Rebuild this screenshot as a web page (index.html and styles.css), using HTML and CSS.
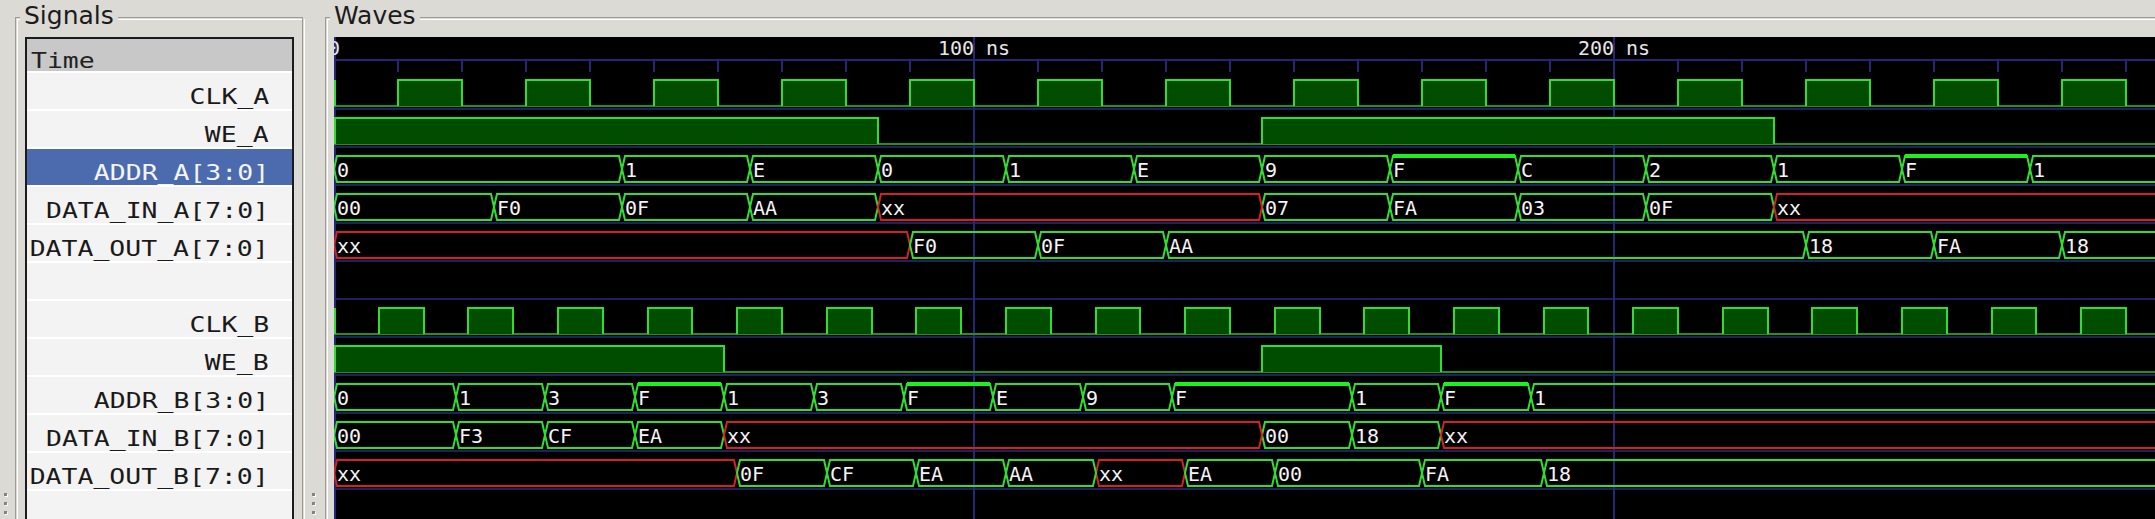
FILE: index.html
```html
<!DOCTYPE html>
<html>
<head>
<meta charset="utf-8">
<title>GTKWave</title>
<link rel="stylesheet" href="styles.css">
</head>
<body>
<div class="app">
  <div class="gutter edge"><span class="grip"></span><span class="grip"></span><span class="grip"></span></div>
  <section class="frame signals">
    <span class="frame-title">Signals</span>
    <div class="siglist">
      <div class="sighead"><span class="nm">Time</span></div>
      <div class="sig"><span class="nm">CLK_A</span></div>
      <div class="sig"><span class="nm">WE_A</span></div>
      <div class="sig sel"><span class="nm">ADDR_A[3:0]</span></div>
      <div class="sig"><span class="nm">DATA_IN_A[7:0]</span></div>
      <div class="sig"><span class="nm">DATA_OUT_A[7:0]</span></div>
      <div class="sig"></div>
      <div class="sig"><span class="nm">CLK_B</span></div>
      <div class="sig"><span class="nm">WE_B</span></div>
      <div class="sig"><span class="nm">ADDR_B[3:0]</span></div>
      <div class="sig"><span class="nm">DATA_IN_B[7:0]</span></div>
      <div class="sig"><span class="nm">DATA_OUT_B[7:0]</span></div>
      <div class="sig"></div>
    </div>
  </section>
  <div class="gutter mid"><span class="grip"></span><span class="grip"></span><span class="grip"></span></div>
  <section class="frame waves">
    <span class="frame-title">Waves</span>
    <div class="canvas">
      <svg class="wv" width="1840" height="490" viewBox="0 0 1840 490" xmlns="http://www.w3.org/2000/svg">
        <defs>
          <pattern id="pclka" patternUnits="userSpaceOnUse" x="0" y="0" width="128" height="490">
            <rect x="64" y="43" width="64" height="26" class="fill"/>
          </pattern>
          <pattern id="pclkb" patternUnits="userSpaceOnUse" x="0" y="0" width="89.6" height="490">
            <rect x="44.8" y="271" width="44.8" height="26" class="fill"/>
          </pattern>
        </defs>
        <!-- grid -->
        <path class="sep" d="M0,72H1840 M0,110H1840 M0,148H1840 M0,186H1840 M0,224H1840 M0,262H1840 M0,300H1840 M0,338H1840 M0,376H1840 M0,414H1840 M0,452H1840"/>
        <path class="grid" d="M0,23H1840 M64,23V35 M128,23V35 M192,23V35 M256,23V35 M320,23V35 M384,23V35 M448,23V35 M512,23V35 M576,23V35 M704,23V35 M768,23V35 M832,23V35 M896,23V35 M960,23V35 M1024,23V35 M1088,23V35 M1152,23V35 M1216,23V35 M1344,23V35 M1408,23V35 M1472,23V35 M1536,23V35 M1600,23V35 M1664,23V35 M1728,23V35 M1792,23V35"/>
        <path class="grid" d="M1,0V490 M640,0V490 M1280,0V490"/>
        <text class="rt" x="0" y="18">0</text>
        <text class="rt" x="640" y="18">100 ns</text>
        <text class="rt" x="1280" y="18">200 ns</text>

        <!-- CLK_A -->
        <path class="lo" d="M0,69H1840"/>
        <rect x="0" y="43" width="1840" height="26" fill="url(#pclka)"/>
        <path class="hi" d="M1,43V69 M64,69V43H128V69 M192,69V43H256V69 M320,69V43H384V69 M448,69V43H512V69 M576,69V43H640V69 M704,69V43H768V69 M832,69V43H896V69 M960,69V43H1024V69 M1088,69V43H1152V69 M1216,69V43H1280V69 M1344,69V43H1408V69 M1472,69V43H1536V69 M1600,69V43H1664V69 M1728,69V43H1792V69"/>

        <!-- WE_A -->
        <path class="lo" d="M0,107H1840"/>
        <rect class="fill" x="1" y="81" width="543" height="26"/>
        <rect class="fill" x="928" y="81" width="512" height="26"/>
        <path class="hi" d="M1,107V81H544V107 M928,107V81H1440V107"/>

        <!-- ADDR_A -->
        <path class="bus" d="M0,132L3,119H285L288,132L285,145H3Z M288,132L291,119H413L416,132L413,145H291Z M416,132L419,119H541L544,132L541,145H419Z M544,132L547,119H669L672,132L669,145H547Z M672,132L675,119H797L800,132L797,145H675Z M800,132L803,119H925L928,132L925,145H803Z M928,132L931,119H1053L1056,132L1053,145H931Z M1056,132L1059,119H1181L1184,132L1181,145H1059Z M1184,132L1187,119H1309L1312,132L1309,145H1187Z M1312,132L1315,119H1437L1440,132L1437,145H1315Z M1440,132L1443,119H1565L1568,132L1565,145H1443Z M1568,132L1571,119H1693L1696,132L1693,145H1571Z M1696,132L1699,119H1845V145H1699Z"/>
        <path class="ones" d="M1059,119H1181 M1571,119H1693"/>
        <text class="vt" x="3" y="140">0</text>
        <text class="vt" x="291" y="140">1</text>
        <text class="vt" x="419" y="140">E</text>
        <text class="vt" x="547" y="140">0</text>
        <text class="vt" x="675" y="140">1</text>
        <text class="vt" x="803" y="140">E</text>
        <text class="vt" x="931" y="140">9</text>
        <text class="vt" x="1059" y="140">F</text>
        <text class="vt" x="1187" y="140">C</text>
        <text class="vt" x="1315" y="140">2</text>
        <text class="vt" x="1443" y="140">1</text>
        <text class="vt" x="1571" y="140">F</text>
        <text class="vt" x="1699" y="140">1</text>

        <!-- DATA_IN_A -->
        <path class="bus" d="M0,170L3,157H157L160,170L157,183H3Z M160,170L163,157H285L288,170L285,183H163Z M288,170L291,157H413L416,170L413,183H291Z M416,170L419,157H541L544,170L541,183H419Z M928,170L931,157H1053L1056,170L1053,183H931Z M1056,170L1059,157H1181L1184,170L1181,183H1059Z M1184,170L1187,157H1309L1312,170L1309,183H1187Z M1312,170L1315,157H1437L1440,170L1437,183H1315Z"/>
        <path class="busx" d="M544,170L547,157H925L928,170L925,183H547Z M1440,170L1443,157H1845V183H1443Z"/>
        <text class="vt" x="3" y="178">00</text>
        <text class="vt" x="163" y="178">F0</text>
        <text class="vt" x="291" y="178">0F</text>
        <text class="vt" x="419" y="178">AA</text>
        <text class="vt" x="547" y="178">xx</text>
        <text class="vt" x="931" y="178">07</text>
        <text class="vt" x="1059" y="178">FA</text>
        <text class="vt" x="1187" y="178">03</text>
        <text class="vt" x="1315" y="178">0F</text>
        <text class="vt" x="1443" y="178">xx</text>

        <!-- DATA_OUT_A -->
        <path class="busx" d="M0,208L3,195H573L576,208L573,221H3Z"/>
        <path class="bus" d="M576,208L579,195H701L704,208L701,221H579Z M704,208L707,195H829L832,208L829,221H707Z M832,208L835,195H1469L1472,208L1469,221H835Z M1472,208L1475,195H1597L1600,208L1597,221H1475Z M1600,208L1603,195H1725L1728,208L1725,221H1603Z M1728,208L1731,195H1845V221H1731Z"/>
        <text class="vt" x="3" y="216">xx</text>
        <text class="vt" x="579" y="216">F0</text>
        <text class="vt" x="707" y="216">0F</text>
        <text class="vt" x="835" y="216">AA</text>
        <text class="vt" x="1475" y="216">18</text>
        <text class="vt" x="1603" y="216">FA</text>
        <text class="vt" x="1731" y="216">18</text>

        <!-- CLK_B -->
        <path class="lo" d="M0,297H1840"/>
        <rect x="0" y="271" width="1795" height="26" fill="url(#pclkb)"/>
        <path class="hi" d="M1,271V297 M45,297V271H90V297 M134,297V271H179V297 M224,297V271H269V297 M314,297V271H358V297 M403,297V271H448V297 M493,297V271H538V297 M582,297V271H627V297 M672,297V271H717V297 M762,297V271H806V297 M851,297V271H896V297 M941,297V271H986V297 M1030,297V271H1075V297 M1120,297V271H1165V297 M1210,297V271H1254V297 M1299,297V271H1344V297 M1389,297V271H1434V297 M1478,297V271H1523V297 M1568,297V271H1613V297 M1658,297V271H1702V297 M1747,297V271H1792V297"/>

        <!-- WE_B -->
        <path class="lo" d="M0,335H1840"/>
        <rect class="fill" x="1" y="309" width="389" height="26"/>
        <rect class="fill" x="928" y="309" width="179" height="26"/>
        <path class="hi" d="M1,335V309H390V335 M928,335V309H1107V335"/>

        <!-- ADDR_B -->
        <path class="bus" d="M0,360L3,347H119L122,360L119,373H3Z M122,360L125,347H208L211,360L208,373H125Z M211,360L214,347H298L301,360L298,373H214Z M301,360L304,347H387L390,360L387,373H304Z M390,360L393,347H477L480,360L477,373H393Z M480,360L483,347H567L570,360L567,373H483Z M570,360L573,347H656L659,360L656,373H573Z M659,360L662,347H746L749,360L746,373H662Z M749,360L752,347H835L838,360L835,373H752Z M838,360L841,347H1015L1018,360L1015,373H841Z M1018,360L1021,347H1104L1107,360L1104,373H1021Z M1107,360L1110,347H1194L1197,360L1194,373H1110Z M1197,360L1200,347H1845V373H1200Z"/>
        <path class="ones" d="M304,347H387 M573,347H656 M841,347H1015 M1110,347H1194"/>
        <text class="vt" x="3" y="368">0</text>
        <text class="vt" x="125" y="368">1</text>
        <text class="vt" x="214" y="368">3</text>
        <text class="vt" x="304" y="368">F</text>
        <text class="vt" x="393" y="368">1</text>
        <text class="vt" x="483" y="368">3</text>
        <text class="vt" x="573" y="368">F</text>
        <text class="vt" x="662" y="368">E</text>
        <text class="vt" x="752" y="368">9</text>
        <text class="vt" x="841" y="368">F</text>
        <text class="vt" x="1021" y="368">1</text>
        <text class="vt" x="1110" y="368">F</text>
        <text class="vt" x="1200" y="368">1</text>

        <!-- DATA_IN_B -->
        <path class="bus" d="M0,398L3,385H119L122,398L119,411H3Z M122,398L125,385H208L211,398L208,411H125Z M211,398L214,385H298L301,398L298,411H214Z M301,398L304,385H387L390,398L387,411H304Z M928,398L931,385H1015L1018,398L1015,411H931Z M1018,398L1021,385H1104L1107,398L1104,411H1021Z"/>
        <path class="busx" d="M390,398L393,385H925L928,398L925,411H393Z M1107,398L1110,385H1845V411H1110Z"/>
        <text class="vt" x="3" y="406">00</text>
        <text class="vt" x="125" y="406">F3</text>
        <text class="vt" x="214" y="406">CF</text>
        <text class="vt" x="304" y="406">EA</text>
        <text class="vt" x="393" y="406">xx</text>
        <text class="vt" x="931" y="406">00</text>
        <text class="vt" x="1021" y="406">18</text>
        <text class="vt" x="1110" y="406">xx</text>

        <!-- DATA_OUT_B -->
        <path class="busx" d="M0,436L3,423H400L403,436L400,449H3Z M762,436L765,423H848L851,436L848,449H765Z"/>
        <path class="bus" d="M403,436L406,423H490L493,436L490,449H406Z M493,436L496,423H579L582,436L579,449H496Z M582,436L585,423H669L672,436L669,449H585Z M672,436L675,423H759L762,436L759,449H675Z M851,436L854,423H938L941,436L938,449H854Z M941,436L944,423H1085L1088,436L1085,449H944Z M1088,436L1091,423H1207L1210,436L1207,449H1091Z M1210,436L1213,423H1845V449H1213Z"/>
        <text class="vt" x="3" y="444">xx</text>
        <text class="vt" x="406" y="444">0F</text>
        <text class="vt" x="496" y="444">CF</text>
        <text class="vt" x="585" y="444">EA</text>
        <text class="vt" x="675" y="444">AA</text>
        <text class="vt" x="765" y="444">xx</text>
        <text class="vt" x="854" y="444">EA</text>
        <text class="vt" x="944" y="444">00</text>
        <text class="vt" x="1091" y="444">FA</text>
        <text class="vt" x="1213" y="444">18</text>
      </svg>
    </div>
  </section>
</div>
</body>
</html>
```
FILE: styles.css
```css
html, body {
  margin: 0;
  padding: 0;
}
body {
  background: #dcdad5;
  width: 2155px;
  height: 519px;
  overflow: hidden;
}
.app {
  display: flex;
  height: 519px;
  overflow: hidden;
}
.gutter {
  flex: none;
  display: flex;
  flex-direction: column;
  justify-content: flex-end;
  gap: 6px;
  padding-bottom: 5px;
  box-sizing: border-box;
}
.gutter.edge {
  width: 15px;
  padding-left: 4px;
}
.gutter.mid {
  width: 22px;
  padding-left: 9px;
}
.grip {
  display: block;
  width: 3px;
  height: 3px;
  background: #85837e;
  box-shadow: 1px 1px 0 #ffffff;
}
.frame {
  flex: none;
  position: relative;
  margin-top: 17px;
  height: 560px;
  box-sizing: border-box;
  border: 1px solid #9d9b96;
  box-shadow: inset 1px 1px 0 #dcdad5, inset 2px 2px 0 #ffffff, 1px 1px 0 #dcdad5, 2px 2px 0 #ffffff;
  padding: 19px 8px 0 9px;
}
.frame-title {
  position: absolute;
  top: -17px;
  left: 4px;
  padding: 0 4px;
  background: #dcdad5;
  font: 25px/30px "DejaVu Sans", sans-serif;
  color: #1c1c1c;
}
.signals {
  width: 288px;
}
.waves {
  width: 1850px;
  padding: 19px 0 0 8px;
}
.siglist {
  border: 2px solid #1c1c1c;
  background: #f3f3f3;
  height: 520px;
  color: #1a1a1a;
  font: 21px/21px "DejaVu Sans Mono", monospace;
}
.sighead {
  height: 34px;
  box-sizing: border-box;
  border-bottom: 2px solid #ffffff;
  background: #c8c8c8;
  padding: 12px 0 0 4px;
  color: #222222;
}
.sig {
  height: 38px;
  box-sizing: border-box;
  border-bottom: 2px solid #ffffff;
  padding: 14px 23px 0 0;
  text-align: right;
}
.sig.sel {
  background: #4b6bae;
  color: #f4f4f4;
}
.nm {
  display: inline-block;
  white-space: pre;
  transform: scaleX(1.26);
  transform-origin: right center;
}
.sighead .nm {
  transform-origin: left center;
}
.canvas {
  background: #000000;
  height: 520px;
  overflow: hidden;
}
.wv {
  display: block;
}
.sep {
  stroke: #20205c;
  stroke-width: 2;
  fill: none;
}
.grid {
  stroke: #262678;
  stroke-width: 2;
  fill: none;
}
.rt {
  fill: #e6e6e6;
  font-family: "DejaVu Sans Mono", monospace;
  font-size: 20px;
  text-anchor: middle;
}
.vt {
  fill: #f4f4f4;
  font-family: "DejaVu Sans Mono", monospace;
  font-size: 20px;
}
.fill {
  fill: #004d00;
}
.lo {
  stroke: #249024;
  stroke-width: 2;
  fill: none;
}
.hi {
  stroke: #33dc33;
  stroke-width: 2;
  fill: none;
}
.bus {
  stroke: #33dc33;
  stroke-width: 2;
  fill: none;
}
.busx {
  stroke: #d42222;
  stroke-width: 2;
  fill: none;
}
.ones {
  stroke: #1ef01e;
  stroke-width: 4;
  fill: none;
}
```
